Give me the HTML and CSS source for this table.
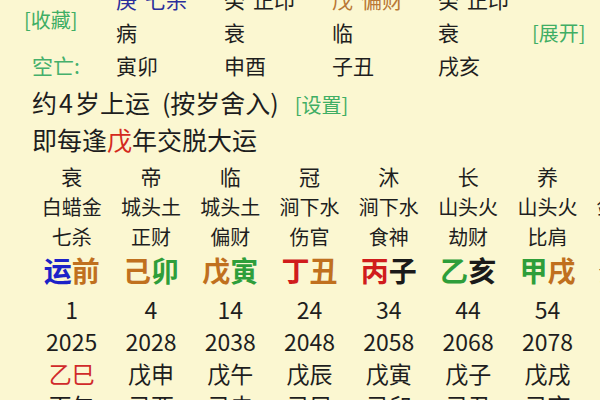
FILE: index.html
```html
<!DOCTYPE html>
<html lang="zh">
<head>
<meta charset="utf-8">
<link rel="stylesheet" href="styles.css">
</head>
<body>
<div class="page">
  <div class="top">
    <div class="lbl fav">[收藏]</div>
    <div class="c2 r1 blue">庚<span class="sp">七杀</span></div>
    <div class="c3 r1">癸<span class="sp">正印</span></div>
    <div class="c4 r1 brown">戊<span class="sp">偏财</span></div>
    <div class="c5 r1">癸<span class="sp">正印</span></div>
    <div class="c2 r2">病</div>
    <div class="c3 r2">衰</div>
    <div class="c4 r2">临</div>
    <div class="c5 r2">衰</div>
    <div class="c6 r2 link">[展开]</div>
    <div class="lbl r3 green">空亡:</div>
    <div class="c2 r3">寅卯</div>
    <div class="c3 r3">申酉</div>
    <div class="c4 r3">子丑</div>
    <div class="c5 r3">戌亥</div>
  </div>
  <div class="line first">约<span class="digit">4</span>岁上运<span class="paren">(按岁舍入)</span><span class="link set">[设置]</span></div>
  <div class="line">即每逢<span class="red">戊</span>年交脱大运</div>
  <div class="yun">
    <div class="col">
      <div class="cell a">衰</div><div class="cell b">白蜡金</div><div class="cell c">七杀</div>
      <div class="cell gz"><span class="g-blue">运</span><span class="g-brown">前</span></div>
      <div class="cell n">1</div><div class="cell n">2025</div><div class="cell n red2">乙巳</div><div class="cell n">丙午</div>
    </div>
    <div class="col">
      <div class="cell a">帝</div><div class="cell b">城头土</div><div class="cell c">正财</div>
      <div class="cell gz"><span class="g-brown">己</span><span class="g-green">卯</span></div>
      <div class="cell n">4</div><div class="cell n">2028</div><div class="cell n">戊申</div><div class="cell n">己酉</div>
    </div>
    <div class="col">
      <div class="cell a">临</div><div class="cell b">城头土</div><div class="cell c">偏财</div>
      <div class="cell gz"><span class="g-brown">戊</span><span class="g-green">寅</span></div>
      <div class="cell n">14</div><div class="cell n">2038</div><div class="cell n">戊午</div><div class="cell n">己未</div>
    </div>
    <div class="col">
      <div class="cell a">冠</div><div class="cell b">涧下水</div><div class="cell c">伤官</div>
      <div class="cell gz"><span class="g-red">丁</span><span class="g-brown">丑</span></div>
      <div class="cell n">24</div><div class="cell n">2048</div><div class="cell n">戊辰</div><div class="cell n">己巳</div>
    </div>
    <div class="col">
      <div class="cell a">沐</div><div class="cell b">涧下水</div><div class="cell c">食神</div>
      <div class="cell gz"><span class="g-red">丙</span><span class="g-black">子</span></div>
      <div class="cell n">34</div><div class="cell n">2058</div><div class="cell n">戊寅</div><div class="cell n">己卯</div>
    </div>
    <div class="col">
      <div class="cell a">长</div><div class="cell b">山头火</div><div class="cell c">劫财</div>
      <div class="cell gz"><span class="g-green">乙</span><span class="g-black">亥</span></div>
      <div class="cell n">44</div><div class="cell n">2068</div><div class="cell n">戊子</div><div class="cell n">己丑</div>
    </div>
    <div class="col">
      <div class="cell a">养</div><div class="cell b">山头火</div><div class="cell c">比肩</div>
      <div class="cell gz"><span class="g-green">甲</span><span class="g-brown">戌</span></div>
      <div class="cell n">54</div><div class="cell n">2078</div><div class="cell n">戊戌</div><div class="cell n">己亥</div>
    </div>
    <div class="col">
      <div class="cell a">胎</div><div class="cell b">剑锋金</div><div class="cell c">正印</div>
      <div class="cell gz"><span class="g-black">癸</span><span class="g-brown">酉</span></div>
      <div class="cell n">64</div><div class="cell n">2088</div><div class="cell n">戊申</div><div class="cell n">己酉</div>
    </div>
  </div>
</div>
</body>
</html>
```
FILE: styles.css
```css
html, body {
  margin: 0;
  padding: 0;
  background: #fbf7d1;
  width: 600px;
  height: 400px;
  overflow: hidden;
}
body {
  font-family: "Noto Sans CJK SC", "Noto Sans", sans-serif;
  color: #1e1e1e;
}
.page {
  padding-left: 32px;
}
.top {
  display: grid;
  grid-template-columns: 84px 108px 108px 106px 97px 1fr;
  grid-template-rows: 33px 33px 33px;
  margin-top: -17px;
  font-size: 21px;
  line-height: 33px;
}
.fav {
  grid-column: 1;
  grid-row: 1 / span 2;
  align-self: center;
  padding-top: 6px;
  margin-left: -8px;
  font-size: 20px;
  color: #3fae64;
}
.sp { margin-left: 8px; }
.lbl { grid-column: 1; }
.c2 { grid-column: 2; }
.c3 { grid-column: 3; }
.c4 { grid-column: 4; }
.c5 { grid-column: 5; }
.c6 { grid-column: 6; margin-left: -3px; }
.r1 { grid-row: 1; }
.r2 { grid-row: 2; }
.r3 { grid-row: 3; }
.green { color: #45b06c; }
.blue { color: #2b2f9c; }
.brown { color: #b97836; }
.link { color: #3fae64; font-size: 20px; }
.line {
  font-size: 25px;
  line-height: 34px;
}
.first { margin-top: 3px; }
.digit { margin: 0 2px; }
.paren { margin-left: 12px; }
.set { margin-left: 16px; }
.red { color: #d42a1e; }
.yun {
  display: flex;
  flex-wrap: nowrap;
  margin-top: 4px;
}
.col {
  flex: 0 0 79.3px;
  display: flex;
  flex-direction: column;
  align-items: center;
  white-space: nowrap;
}
.cell { text-align: center; }
.a { height: 32px; line-height: 32px; font-size: 21px; }
.b { height: 30px; line-height: 30px; font-size: 20px; }
.c { height: 30px; line-height: 30px; font-size: 20px; }
.gz {
  height: 41px;
  line-height: 36px;
  font-size: 28px;
  font-weight: 700;
}
.n { height: 32px; line-height: 32px; font-size: 23px; }
.red2 { color: #d02a2a; }
.g-blue { color: #1c22c8; }
.g-brown { color: #c0701e; }
.g-green { color: #2e9e3a; }
.g-red { color: #d01c1c; }
.g-black { color: #1a1a1a; }
```
